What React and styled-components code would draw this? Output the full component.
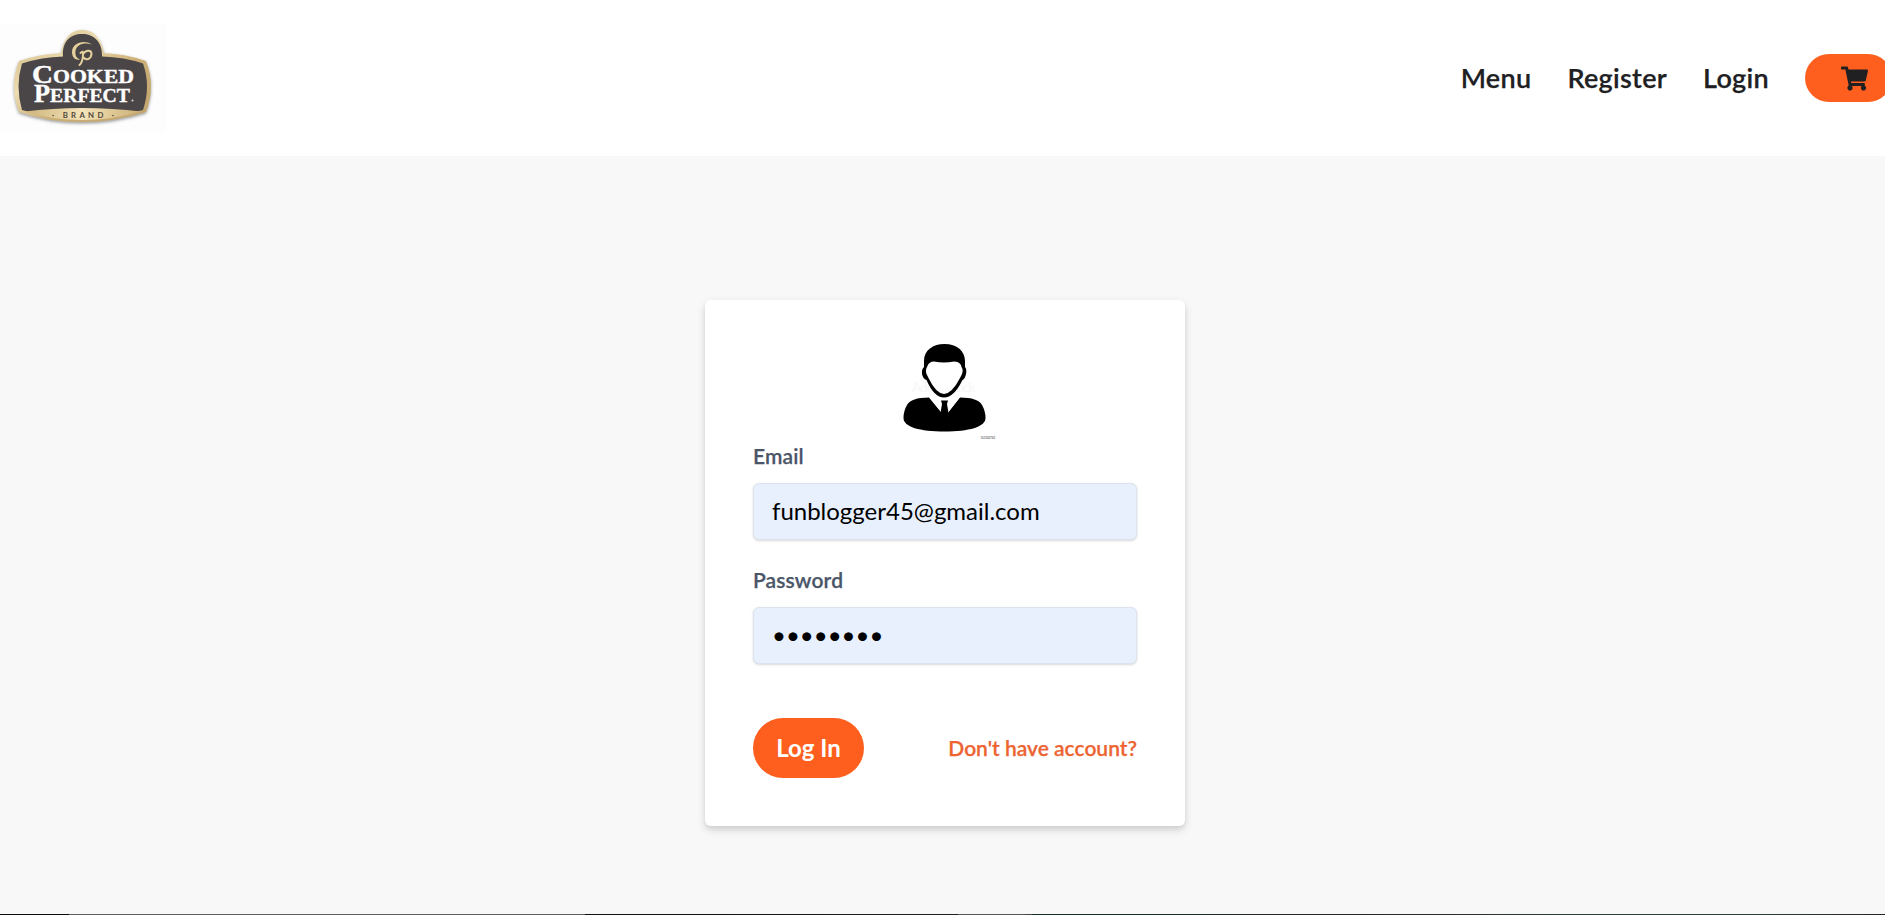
import React from "react";
import styled, { createGlobalStyle } from "styled-components";
import { FaShoppingCart } from "react-icons/fa";

const GlobalStyle = createGlobalStyle`
  html { font-size: 24px; }
  *, *::before, *::after { box-sizing: border-box; }
  body {
    margin: 0;
    overflow: hidden;
    background: #f8f8f8;
    color: #202023;
    font-family: Lato, "Liberation Sans", sans-serif;
    line-height: 1.5;
  }
`;

const Page = styled.div`
  height: 915px;
  display: flex;
  flex-direction: column;
  overflow: hidden;
`;

const Header = styled.header`
  flex: none;
  height: 156px;
  background: #fff;
  display: flex;
  align-items: center;
  justify-content: space-between;
`;

const LogoLink = styled.a`
  display: block;
  width: 166px;
  height: 108px;
  background: #fdfdfd;
  svg { display: block; }
`;

const Nav = styled.nav`
  display: flex;
  align-items: center;
  gap: 36px;
  margin-right: -7px;
`;

const NavLink = styled.a`
  font-size: 27px;
  line-height: 36px;
  font-weight: 600;
  letter-spacing: 0.3px;
  color: #202023;
  -webkit-text-stroke: 0.25px #202023;
`;

const CartButton = styled.a`
  display: flex;
  align-items: center;
  width: 87px;
  height: 48px;
  padding-left: 36px;
  border-radius: 24px;
  background: #fe5f1e;
  color: #202023;
`;

const Main = styled.main`
  flex: 1;
  display: flex;
  justify-content: center;
  align-items: flex-start;
  padding: 144px 0 0 5px;
`;

const Card = styled.form`
  width: 480px;
  height: 526px;
  padding: 36px 48px 48px;
  background: #fff;
  border-radius: 6px;
  box-shadow: 0 4px 10px rgba(0, 0, 0, 0.12), 0 3px 5px rgba(0, 0, 0, 0.07);
`;

const Avatar = styled.svg`
  display: block;
  width: 130px;
  height: 105px;
  margin: 0 auto;
`;

const Field = styled.div`
  margin-bottom: ${(p) => (p.$last ? 54 : 25)}px;
`;

const Label = styled.label`
  display: block;
  margin-bottom: 12px;
  font-size: 21px;
  line-height: 30px;
  font-weight: 600;
  letter-spacing: 0.12px;
  color: #4a5568;
  -webkit-text-stroke: 0.25px #4a5568;
`;

const Input = styled.input`
  display: block;
  width: 100%;
  height: 57px;
  padding: 11px 18px 14px;
  border: 1px solid #dce3ee;
  border-radius: 6px;
  background: #e8f0fe;
  box-shadow: 0 1px 3px rgba(0, 0, 0, 0.1), 0 1px 2px rgba(0, 0, 0, 0.06);
  color: #000;
  font: 400 24px/30px Lato, "Liberation Sans", sans-serif;
`;

const Actions = styled.div`
  display: flex;
  align-items: center;
  justify-content: space-between;
`;

const SubmitButton = styled.button`
  width: 111px;
  height: 60px;
  padding: 0;
  border: 0;
  border-radius: 30px;
  background: #fe5f1e;
  color: #fff;
  font: 700 24px/36px Lato, "Liberation Sans", sans-serif;
`;

const AccountLink = styled.a`
  font-size: 21px;
  line-height: 30px;
  font-weight: 600;
  color: #ed6432;
  -webkit-text-stroke: 0.25px #ed6432;
`;

const FooterEdge = styled.footer`
  flex: none;
  height: 1px;
  background: linear-gradient(
    to right,
    #0d0d0d 69px, #5f5c5c 69px 585px, #111 585px 700px, #231f20 900px 958px,
    #5a5555 958px 1025px, #444 1025px 1032px, #17302a 1032px, #17302a 1150px,
    #262626 1300px, #2b2b2b 1430px, #2a3d38 1560px 1760px, #262626 1885px
  );
`;

function BrandLogo() {
  return (
    <svg width="166" height="108" viewBox="0 24 166 108" role="img" aria-label="Cooked Perfect Brand">
      <defs>
        <linearGradient id="gold" x1="0" y1="0" x2="1" y2="1">
          <stop offset="0" stopColor="#cdb67f" />
          <stop offset=".35" stopColor="#ecdcb0" />
          <stop offset=".6" stopColor="#cdb078" />
          <stop offset="1" stopColor="#c0a46c" />
        </linearGradient>
        <linearGradient id="band" x1="0" x2="1">
          <stop offset="0" stopColor="#cdb47c" />
          <stop offset=".5" stopColor="#f3e3b8" />
          <stop offset="1" stopColor="#cbae74" />
        </linearGradient>
        <filter id="shade" x="-10%" y="-10%" width="120%" height="125%">
          <feDropShadow dx="0" dy="1.5" stdDeviation="1.8" floodColor="#555" floodOpacity=".6" />
        </filter>
      </defs>
      <path filter="url(#shade)" fill="url(#gold)" d="M19 61Q40 54 61 53C64 38 71 30 82 30C94 30 101 38 104 53Q126 54 146 61Q156 86 146 112Q115 122 82 122Q48 122 19 112Q9 86 19 61Z" />
      <path fill="#4a4547" d="M22 63.5Q42 57 63 56.500C62 42 70 34 82 34C94 34 102.500 42 102 56.500Q124 57 143 63.500Q151 86 143 110Q115 118 82 118Q49 118 22 110Q15 86 22 63.500Z" />
      <path fill="url(#band)" d="M25 111.500Q52 108 82 108Q113 108 141 111.500Q112 120 82 120Q52 120 25 111.500Z" />
      <path fill="#e3d09c" d="M92 44.500C84 39 72 43 72 52C72 58 76 60.500 80 59.500C76 58 75 55 75.500 51C76.500 44.500 84 42 92 44.500Z" />
      <path fill="none" stroke="#e3d09c" strokeWidth="2" strokeLinecap="round" d="M80.500 53Q83.500 50 83 54Q83 62 79.500 65M83 54C86 49.500 91.500 50 91.500 54C91 59.500 86 60.500 83.500 57.500" />
      <g fill="#fff" stroke="#fff" strokeWidth=".4" fontFamily="'Liberation Serif', serif" fontWeight="700">
        <text x="32" y="83.300" fontSize="26" textLength="102" lengthAdjust="spacingAndGlyphs">C<tspan fontSize="19.500">OOKED</tspan></text>
        <text x="34" y="102" fontSize="26" textLength="96" lengthAdjust="spacingAndGlyphs">P<tspan fontSize="19.500">ERFECT</tspan></text>
      </g>
      <circle cx="132.500" cy="100.500" r="1" fill="#ddd" />
      <text x="52" y="117.500" fontSize="7.800" fontFamily="Lato, sans-serif" fontWeight="700" fill="#51473a" textLength="62">· BRAND ·</text>
    </svg>
  );
}

function Portrait() {
  return (
    <Avatar viewBox="880 336 130 105" aria-hidden="true">
      <text x="912" y="392" fontSize="14" fontFamily="Lato, sans-serif" fill="#f7f7f7" textLength="63">Adobe Stock</text>
      <path d="M924 361C924 350 933 344 944.500 344C957 344 965 351 965 361V367Q967 369 966 374Q965 379 962.500 380Q954 397.500 944 397.500Q934 397.500 926.500 380Q923 379 922 374Q921.500 369 924 367Z" />
      <path fill="#fff" d="M927.500 366Q929 361.500 934 361.500Q944 363.500 954 361.500L957.500 362Q961 363.500 961.500 367Q963.500 370 962 374L960 378Q952 393.500 944 394Q936 393.500 928.500 378L926.500 374Q925 370 927.500 366Z" />
      <path d="M929 397.500Q911 397.500 907 405Q903.500 411 903.500 418C903.500 427 920 431.500 944.500 431.500C969 431.500 985.500 427 985.500 418Q985.500 411 982 405Q978 397.500 960 397.500L948.500 412L944.500 416L941 412Z" />
      <path fill="#fff" d="M929 397L941.500 412.500L943 403L940.500 400H948.500L946.500 403L948 412.500L960 397Q952 399.500 944.500 399.500Q937 399.500 929 397Z" />
      <path d="M941 400.500H948L947 404L948.500 413L944.500 418L940.500 413L942 404Z" />
      <text x="980.500" y="438.500" fontSize="2.800" fontFamily="Lato, sans-serif" fontWeight="700" fill="#777" textLength="14.500">163382760</text>
    </Avatar>
  );
}

export default function App() {
  return (
    <Page>
      <GlobalStyle />
      <Header>
        <LogoLink><BrandLogo /></LogoLink>
        <Nav>
          <NavLink>Menu</NavLink>
          <NavLink>Register</NavLink>
          <NavLink>Login</NavLink>
          <CartButton aria-label="Cart"><FaShoppingCart size={27} /></CartButton>
        </Nav>
      </Header>
      <Main>
        <Card>
          <Portrait />
          <Field>
            <Label htmlFor="email">Email</Label>
            <Input id="email" type="text" defaultValue="funblogger45@gmail.com" />
          </Field>
          <Field $last>
            <Label htmlFor="password">Password</Label>
            <Input id="password" type="password" defaultValue="password" />
          </Field>
          <Actions>
            <SubmitButton type="button">Log In</SubmitButton>
            <AccountLink>Don't have account?</AccountLink>
          </Actions>
        </Card>
      </Main>
      <FooterEdge />
    </Page>
  );
}
